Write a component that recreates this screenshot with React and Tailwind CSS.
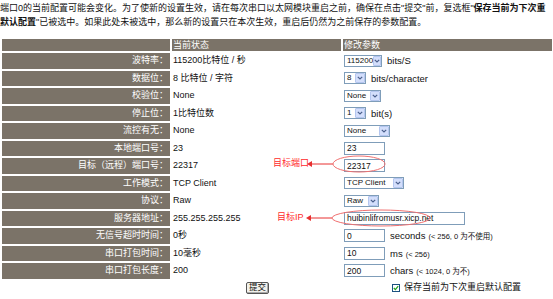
import React from "react";

const FONT = { fontFamily: '"Liberation Sans", Arial, "Noto Sans CJK SC", sans-serif' };

function Chevron() {
  return (
    <span className="flex h-[10px] w-[10px] items-center justify-center rounded-[1px] border border-[#b4c6ef] bg-[#d3defb]">
      <svg width="6" height="4" viewBox="0 0 6 4">
        <path d="M0.8 0.8 L3 3 L5.2 0.8" fill="none" stroke="#4a5f8c" strokeWidth="1.2" />
      </svg>
    </span>
  );
}

function Select({ value, w }) {
  return (
    <div
      className="flex h-[12px] items-center justify-between border border-[#7f9db9] bg-white pl-[2px] pr-[0px] text-[8px] leading-none text-[#111]"
      style={{ width: w }}
    >
      <span>{value}</span>
      <Chevron />
    </div>
  );
}

function Input({ value, w }) {
  return (
    <div
      className="flex h-[13px] items-center border border-[#7f9db9] bg-white pl-[2px] text-[8.5px] leading-none text-[#111]"
      style={{ width: w }}
    >
      {value}
    </div>
  );
}

function Suffix({ main, small }) {
  return (
    <span className="ml-[5px] whitespace-nowrap text-[9.5px] leading-none text-[#111]">
      {main}
      {small && <span className="ml-[3px] text-[7.5px]">{small}</span>}
    </span>
  );
}

const rows = [
  { label: "波特率：", value: "115200比特位 / 秒", ctrl: <Select value="115200" w={38} />, suffix: <Suffix main="bits/S" /> },
  { label: "数据位：", value: "8 比特位 / 字符", ctrl: <Select value="8" w={22} />, suffix: <Suffix main="bits/character" /> },
  { label: "校验位：", value: "None", ctrl: <Select value="None" w={37} /> },
  { label: "停止位：", value: "1比特位数", ctrl: <Select value="1" w={22} />, suffix: <Suffix main="bit(s)" /> },
  { label: "流控有无：", value: "None", ctrl: <Select value="None" w={46} /> },
  { label: "本地端口号：", value: "23", ctrl: <Input value="23" w={41} /> },
  { label: "目标（远程）端口号：", value: "22317", ctrl: <Input value="22317" w={41} /> },
  { label: "工作模式：", value: "TCP Client", ctrl: <Select value="TCP Client" w={60} /> },
  { label: "协议：", value: "Raw", ctrl: <Select value="Raw" w={35} /> },
  { label: "服务器地址：", value: "255.255.255.255", ctrl: <Input value="huibinlifromusr.xicp.net" w={121} /> },
  { label: "无信号超时时间：", value: "0秒", ctrl: <Input value="0" w={41} />, suffix: <Suffix main="seconds" small="(< 256, 0 为不使用)" /> },
  { label: "串口打包时间：", value: "10毫秒", ctrl: <Input value="10" w={41} />, suffix: <Suffix main="ms" small="(< 256)" /> },
  { label: "串口打包长度：", value: "200", ctrl: <Input value="200" w={41} />, suffix: <Suffix main="chars" small="(< 1024, 0 为不)" /> },
];

function Annotation({ text, top, left, arrowFrom, arrowTo, ellipse }) {
  return (
    <>
      <span
        className="absolute whitespace-nowrap text-[9px] leading-none text-[#ff2a2a]"
        style={{ top: top - 5, left }}
      >
        {text}
      </span>
      <svg className="absolute left-0 top-0" width="553" height="299" viewBox="0 0 553 299">
        <line x1={arrowFrom + 4} y1={top} x2={arrowTo} y2={top} stroke="#e83030" strokeWidth="1" />
        <polygon points={`${arrowFrom},${top} ${arrowFrom + 5},${top - 3} ${arrowFrom + 5},${top + 3}`} fill="#e83030" />
        <ellipse cx={ellipse.cx} cy={ellipse.cy} rx={ellipse.rx} ry={ellipse.ry} fill="none" stroke="#f07070" strokeWidth="1" />
      </svg>
    </>
  );
}

export default function App() {
  return (
    <div className="relative h-[299px] w-[553px] overflow-hidden bg-white" style={FONT}>
      <div className="pt-[1px] text-[9px] leading-[14px] text-[#111]">
        <div className="whitespace-nowrap">
          端口0的当前配置可能会变化。为了使新的设置生效，请在每次串口以太网模块重启之前，确保在点击"提交"前，复选框"<b>保存当前为下次重</b>
        </div>
        <div className="whitespace-nowrap">
          <b>默认配置</b>"已被选中。如果此处未被选中，那么新的设置只在本次生效，重启后仍然为之前保存的参数配置。
        </div>
      </div>

      <div className="ml-[2px] mt-[10px] grid w-[550px] grid-cols-[168px_169px_209px] gap-x-[2px] gap-y-[2px] text-[9px]">
        <div className="h-[12px] bg-[#7b7368]" />
        <div className="flex h-[12px] items-center bg-[#7b7368] pl-[1px] leading-none text-white">当前状态</div>
        <div className="flex h-[12px] items-center bg-[#7b7368] pl-[1px] leading-none text-white">修改参数</div>
        {rows.map((r) => (
          <React.Fragment key={r.label}>
            <div className="flex h-[15.5px] items-center justify-end bg-[#7b7368] pr-[2px] leading-none text-white">
              {r.label}
            </div>
            <div className="flex h-[15.5px] items-center pl-[1px] leading-none text-[#111]">{r.value}</div>
            <div className="flex h-[15.5px] items-center pl-[1px]">
              {r.ctrl}
              {r.suffix}
            </div>
          </React.Fragment>
        ))}
      </div>

      <div className="mt-[3px] flex items-center">
        <div className="ml-[246px] flex h-[12px] w-[23px] items-center justify-center rounded-[2px] border border-[#555] bg-[#f2f1ec] text-[8.5px] leading-none text-[#111] shadow-[inset_-1px_-1px_0_#aaa]">
          提交
        </div>
        <div className="ml-[123px] flex items-center">
          <span className="flex h-[8px] w-[8px] items-center justify-center border border-[#1c5180] bg-white">
            <svg width="6" height="6" viewBox="0 0 6 6">
              <path d="M0.8 3 L2.4 4.6 L5.2 1.2" fill="none" stroke="#21a121" strokeWidth="1.3" />
            </svg>
          </span>
          <span className="ml-[4px] whitespace-nowrap text-[9px] leading-none text-[#111]">保存当前为下次重启默认配置</span>
        </div>
      </div>

      <Annotation
        text="目标端口"
        top={164}
        left={273}
        arrowFrom={307}
        arrowTo={333}
        ellipse={{ cx: 359, cy: 164, rx: 26, ry: 8 }}
      />
      <Annotation
        text="目标IP"
        top={218}
        left={277}
        arrowFrom={306}
        arrowTo={332}
        ellipse={{ cx: 381, cy: 218, rx: 49, ry: 8 }}
      />
    </div>
  );
}
